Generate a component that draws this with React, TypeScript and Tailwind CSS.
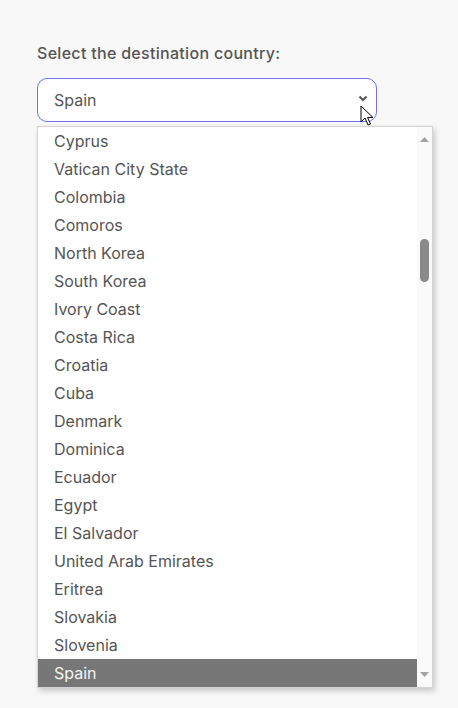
import React from "react";

const countries = [
  "Cyprus",
  "Vatican City State",
  "Colombia",
  "Comoros",
  "North Korea",
  "South Korea",
  "Ivory Coast",
  "Costa Rica",
  "Croatia",
  "Cuba",
  "Denmark",
  "Dominica",
  "Ecuador",
  "Egypt",
  "El Salvador",
  "United Arab Emirates",
  "Eritrea",
  "Slovakia",
  "Slovenia",
  "Spain",
];

export default function App() {
  return (
    <div
      className="w-[458px] h-[708px] bg-[#f8f8f8] overflow-hidden"
      style={{ fontFamily: "Inter, 'Noto Sans', sans-serif" }}
    >
      <div className="pl-[37px] pt-[43px] flex flex-col">
        <label className="text-[16px] leading-[20px] font-medium text-[#555] tracking-[0.3px]">
          Select the destination country:
        </label>
        <div className="relative mt-[15px] w-[340px]">
          <div className="h-[44px] rounded-[10px] border border-[#7272f0] bg-white flex items-center justify-between pl-[16px] pr-[8px]">
            <span className="text-[16px] text-[#555]">Spain</span>
            <svg width="10" height="7" viewBox="0 0 10 7" className="mb-[3px]">
              <path d="M1.5 1.5 L5 5 L8.5 1.5" stroke="#555" strokeWidth="2" fill="none" />
            </svg>
          </div>
          <svg
            className="absolute left-[323px] top-[27px] z-20"
            width="16"
            height="22"
            viewBox="0 0 16 22"
          >
            <path
              d="M1 1 L1 17 L5 13 L8 20 L10.5 19 L7.5 12.5 L13 12.5 Z"
              fill="white"
              stroke="black"
              strokeWidth="1"
              strokeLinejoin="round"
            />
          </svg>
          <div className="absolute left-0 top-[48px] w-[396px] h-[562px] bg-white border border-[#d4d4d4] shadow-[2px_3px_6px_rgba(0,0,0,0.2)] flex z-10">
            <ul className="flex-1 flex flex-col">
              {countries.map((c) => (
                <li
                  key={c}
                  className={
                    c === "Spain"
                      ? "h-[28px] flex items-center pl-[16px] text-[16px] bg-[#777] text-[#f4f4f4]"
                      : "h-[28px] flex items-center pl-[16px] text-[16px] text-[#555]"
                  }
                >
                  {c}
                </li>
              ))}
            </ul>
            <div className="w-[15px] bg-[#fafafa] flex flex-col items-center relative">
              <svg width="9" height="5" viewBox="0 0 9 5" className="mt-[10px]">
                <path d="M0 5 L4.5 0 L9 5 Z" fill="#a3a3a3" />
              </svg>
              <div className="mt-[97px] w-[9px] h-[43px] rounded-full bg-[#8a8a8a]" />
              <div className="flex-1" />
              <svg width="9" height="5" viewBox="0 0 9 5" className="mb-[10px]">
                <path d="M0 0 L4.5 5 L9 0 Z" fill="#a3a3a3" />
              </svg>
            </div>
          </div>
        </div>
      </div>
    </div>
  );
}
